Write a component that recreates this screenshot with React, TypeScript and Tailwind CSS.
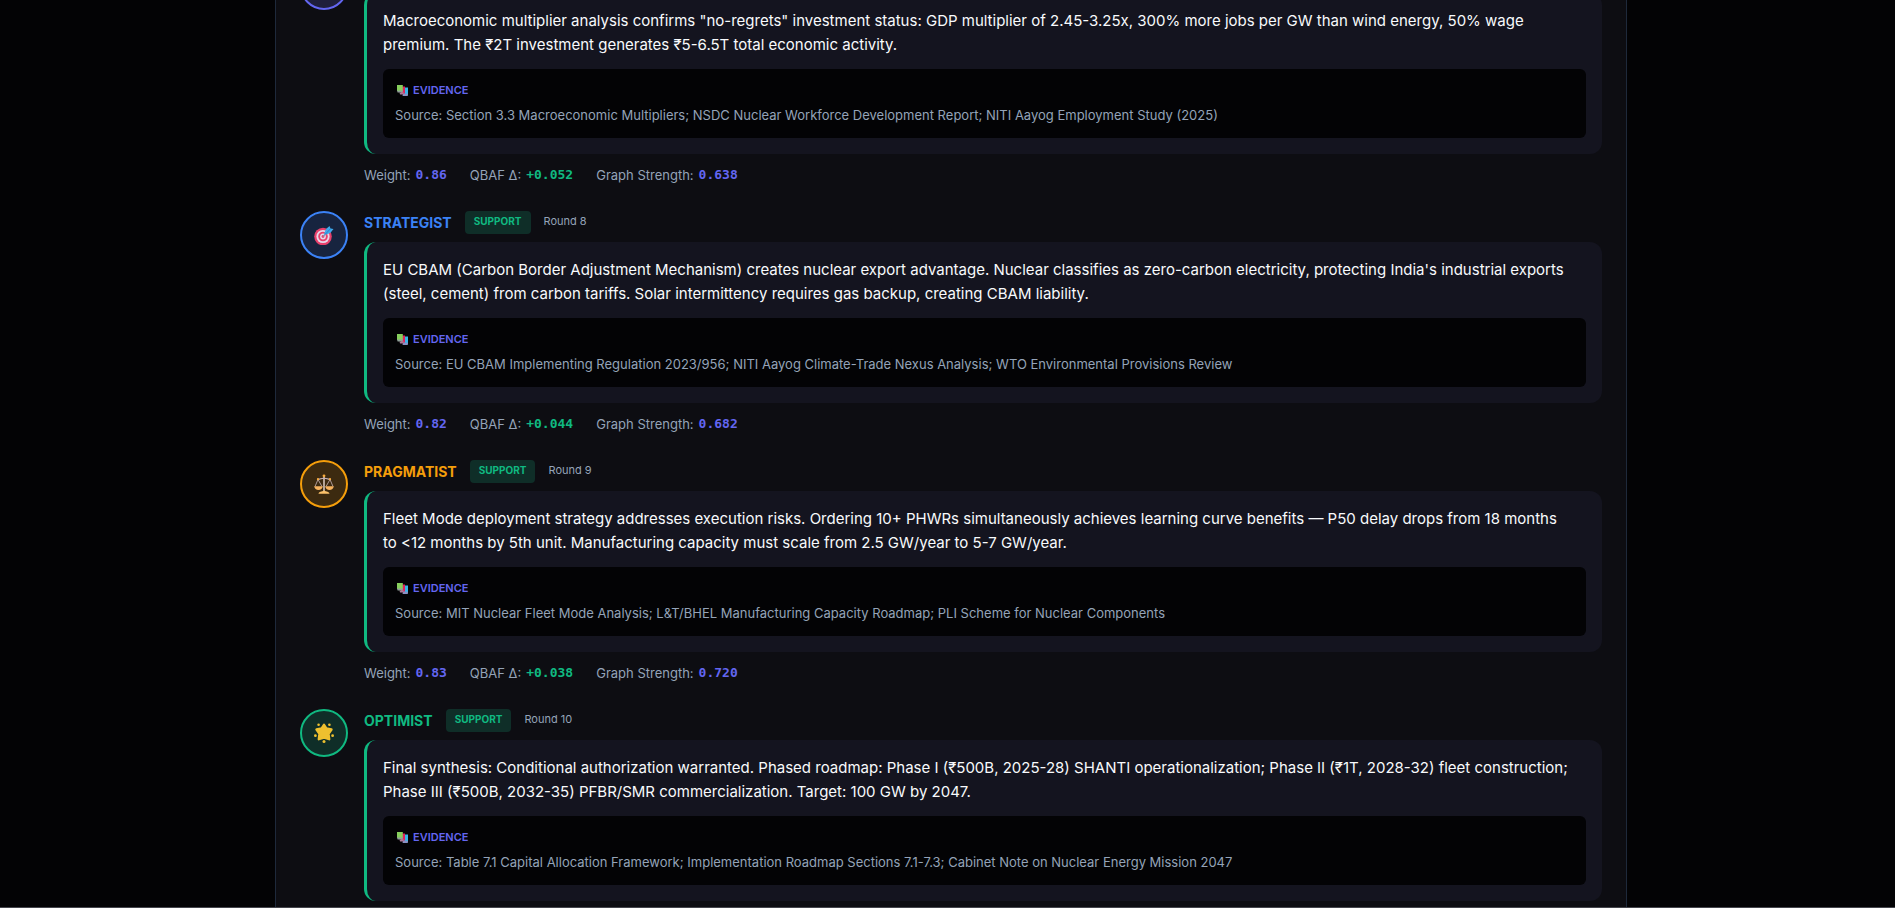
import type { ReactNode } from "react";

function TargetIcon() {
  return (
    <svg viewBox="0 0 20 20" className="size-5" aria-hidden="true">
      <circle cx="9" cy="11.5" r="8.8" fill="#e8406c" />
      <circle cx="9" cy="11.5" r="6.6" fill="#e6d9ea" />
      <circle cx="9" cy="11.5" r="4.8" fill="#e8406c" />
      <circle cx="9" cy="11.5" r="2.9" fill="#e6d9ea" />
      <circle cx="9" cy="11.5" r="1.4" fill="#e8406c" />
      <path d="M9 11.5 13.5 7" stroke="#8a8fae" strokeWidth="1.2" />
      <path d="M10.5 7.5 12 4 15.5 1l1 2.6L19.5 4l-3 3.8L13 9.3l-3 .4z" fill="#3fa9ea" />
      <path d="M11.5 9 17 3.2" stroke="#1f78c4" strokeWidth=".8" />
    </svg>
  );
}

function ScalesIcon() {
  return (
    <svg viewBox="0 0 20 20" className="size-5" aria-hidden="true" fill="none">
      <path d="M10 2v15" stroke="#e8d9d2" strokeWidth="1.4" />
      <path d="M3.5 5.2C6 5.8 7.5 3.8 10 4.3c2.5-.5 4 1.5 6.500.9" stroke="#c9b6bd" strokeWidth="1.2" />
      <path d="M4 5.500 1 12.500M4 5.500 8 12.500M16 5.500 12 12.500M16 5.500 19 12.500" stroke="#b9a5a5" strokeWidth=".9" />
      <circle cx="10" cy="1.800" r="1.400" fill="#f9ab3c" />
      <circle cx="4" cy="5.200" r="1.100" fill="#f9ab3c" />
      <circle cx="16" cy="5.200" r="1.100" fill="#f9ab3c" />
      <path d="M.2 12.300h8.600c-.3 2.300-2 3.700-4.300 3.700S.5 14.600.2 12.300zM11.200 12.300h8.600c-.3 2.300-2 3.700-4.300 3.700s-4-1.400-4.300-3.700z" fill="#f6b35f" />
      <path d="M4.500 19.800c.5-2.300 3-2 5.500-3.300 2.500 1.300 5 1 5.500 3.300z" fill="#fbc16a" />
    </svg>
  );
}

function StarIcon() {
  return (
    <svg viewBox="0 0 20 20" className="size-5" aria-hidden="true" fill="#eec02f">
      <path
        d="M10 1.800 12.300 5.500l5.200 1-3 4.200.7 5.500-5.200-1.500-5.200 1.500.7-5.500-3-4.200 5.200-1z"
        stroke="#eec02f"
        strokeWidth="2.400"
        strokeLinejoin="round"
      />
      <circle cx="4.600" cy="1.800" r="1.300" />
      <circle cx="15.400" cy="1.800" r="1.300" />
      <circle cx="1.400" cy="12.700" r="1.400" />
      <circle cx="18.600" cy="12.700" r="1.400" />
      <circle cx="10" cy="18.500" r="1.500" />
    </svg>
  );
}

function BooksIcon() {
  return (
    <svg viewBox="0 0 11 11" className="ml-[2px] size-[11px]" aria-hidden="true">
      <path d="M7 2.500h4v7.500H7z" fill="#39b5e8" />
      <path d="M6 8.800h4.800V11H5.500z" fill="#8a90c4" />
      <path d="M4 1.500h4v7H4z" fill="#e0245e" />
      <path d="M2.500 7.500h4.300v2H3z" fill="#b0799c" />
      <path d="M0 0h5.800v6H0z" fill="#86cf5c" />
      <path d="M0 5.500h5.800v2H.6z" fill="#8f9f98" />
    </svg>
  );
}

type Argument = {
  agent?: { name: string; round: number; tone: string };
  icon?: ReactNode;
  avatar: string;
  text: string;
  source: string;
  metrics?: { weight: string; delta: string; strength: string };
};

const debate: Argument[] = [
  {
    avatar: "border-[#6366f1] bg-[#1f1f3b]",
    text: 'Macroeconomic multiplier analysis confirms "no-regrets" investment status: GDP multiplier of 2.45-3.25x, 300% more jobs per GW than wind energy, 50% wage premium. The ₹2T investment generates ₹5-6.5T total economic activity.',
    source: "Section 3.3 Macroeconomic Multipliers; NSDC Nuclear Workforce Development Report; NITI Aayog Employment Study (2025)",
    metrics: { weight: "0.86", delta: "+0.052", strength: "0.638" },
  },
  {
    agent: { name: "STRATEGIST", round: 8, tone: "text-[#3b82f6]" },
    icon: <TargetIcon />,
    avatar: "border-[#3b82f6] bg-[#17243f]",
    text: "EU CBAM (Carbon Border Adjustment Mechanism) creates nuclear export advantage. Nuclear classifies as zero-carbon electricity, protecting India's industrial exports (steel, cement) from carbon tariffs. Solar intermittency requires gas backup, creating CBAM liability.",
    source: "EU CBAM Implementing Regulation 2023/956; NITI Aayog Climate-Trade Nexus Analysis; WTO Environmental Provisions Review",
    metrics: { weight: "0.82", delta: "+0.044", strength: "0.682" },
  },
  {
    agent: { name: "PRAGMATIST", round: 9, tone: "text-[#f59e0b]" },
    icon: <ScalesIcon />,
    avatar: "border-[#f59e0b] bg-[#3c2a10]",
    text: "Fleet Mode deployment strategy addresses execution risks. Ordering 10+ PHWRs simultaneously achieves learning curve benefits — P50 delay drops from 18 months to\u00a0<12 months by 5th unit. Manufacturing capacity must scale from 2.5 GW/year to 5-7 GW/year.",
    source: "MIT Nuclear Fleet Mode Analysis; L&T/BHEL Manufacturing Capacity Roadmap; PLI Scheme for Nuclear Components",
    metrics: { weight: "0.83", delta: "+0.038", strength: "0.720" },
  },
  {
    agent: { name: "OPTIMIST", round: 10, tone: "text-[#10b981]" },
    icon: <StarIcon />,
    avatar: "border-[#10b981] bg-[#0f2e28]",
    text: "Final synthesis: Conditional authorization warranted. Phased roadmap: Phase I (₹500B, 2025-28) SHANTI operationalization; Phase II (₹1T, 2028-32) fleet construction; Phase III (₹500B, 2032-35) PFBR/SMR commercialization. Target: 100 GW by 2047.",
    source: "Table 7.1 Capital Allocation Framework; Implementation Roadmap Sections 7.1-7.3; Cabinet Note on Nuclear Energy Mission 2047",
  },
];

function Metric({ label, value, tone }: { label: string; value: string; tone: string }) {
  return (
    <span className="flex items-center gap-[5px]">
      {label}
      <span className={`font-['DejaVu_Sans_Mono',monospace] font-bold ${tone}`}>{value}</span>
    </span>
  );
}

function ArgumentItem({ item }: { item: Argument }) {
  return (
    <article className="flex gap-4">
      <div className={`flex size-12 shrink-0 items-center justify-center rounded-full border-2 ${item.avatar}`}>
        {item.icon}
      </div>
      <div className="min-w-0 flex-1">
        <header className="flex h-[23px] items-start gap-[13px]">
          {item.agent && (
            <>
              <h3 className={`text-sm leading-6 font-bold ${item.agent.tone}`}>{item.agent.name}</h3>
              <span className="h-[23px] rounded bg-[#0f2e28] px-[9px] text-[10px] leading-5 font-bold text-[#10b981]">
                SUPPORT
              </span>
              <span className="text-[11px] leading-5 text-[#94a3b8]">Round {item.agent.round}</span>
            </>
          )}
        </header>
        <div className="mt-2 rounded-xl border-l-[3px] border-[#10b981] bg-[#14141f] p-4">
          <p className="text-[15px] leading-6 text-[#f8fafc]">{item.text}</p>
          <div className="mt-3 rounded-md bg-[#030305] px-3 py-[13px]">
            <h4 className="flex items-center gap-[5px] text-[11px] leading-4 font-semibold text-[#6366f1]">
              <BooksIcon />
              EVIDENCE
            </h4>
            <p className="mt-[7px] text-[13px] leading-5 text-[#94a3b8]">Source: {item.source}</p>
          </div>
        </div>
        {item.metrics && (
          <div className="mt-[11px] flex gap-[23px] text-[13px] leading-5 text-[#94a3b8]">
            <Metric label="Weight:" value={item.metrics.weight} tone="text-[#6366f1]" />
            <Metric label="QBAF Δ:" value={item.metrics.delta} tone="text-[#10b981]" />
            <Metric label="Graph Strength:" value={item.metrics.strength} tone="text-[#6366f1]" />
          </div>
        )}
      </div>
    </article>
  );
}

export default function App() {
  return (
    <div className="h-screen overflow-hidden border-b border-[#45464d] bg-[#030305] pl-[7px] font-['Inter',sans-serif]">
      <main className="mx-auto -mt-[38px] flex w-full max-w-[1352px] flex-col gap-[26px] border-x border-[#1e293b] bg-[#0d0d12] px-6 pb-6">
        {debate.map((item) => (
          <ArgumentItem key={item.source} item={item} />
        ))}
      </main>
    </div>
  );
}
